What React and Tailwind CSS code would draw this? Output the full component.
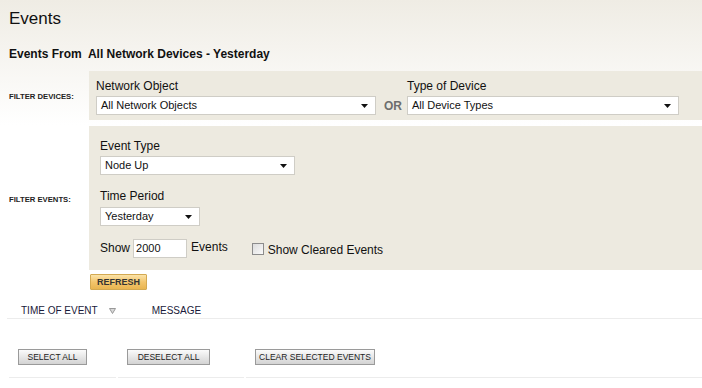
import React from 'react';

const Caret = () => (
  <svg width="7" height="4" viewBox="0 0 7 4" className="shrink-0">
    <path d="M0 0h7L3.5 4z" fill="#111" />
  </svg>
);

const Select = ({ value, className }) => (
  <div
    className={`flex h-[19px] items-center justify-between border border-[#cfcdc6] bg-white pl-[4px] pr-[7px] text-[11px] text-[#111] ${className}`}
  >
    <span>{value}</span>
    <Caret />
  </div>
);

const GreyButton = ({ children, className }) => (
  <button
    className={`block h-[16px] whitespace-nowrap border border-[#9a9a9a] bg-gradient-to-b from-[#fbfbfb] to-[#d3d3d3] text-[8.5px] leading-[14px] text-[#222] ${className}`}
  >
    {children}
  </button>
);

export default function App() {
  return (
    <div className="h-[388px] w-[702px] overflow-hidden bg-[linear-gradient(#efece4,#ffffff_125px)] font-['Liberation_Sans',Arial,sans-serif] text-[#111]">
      {/* Title */}
      <div className="h-[71px] pl-[9px] pt-[9px]">
        <h1 className="text-[17px] leading-[20px]">Events</h1>
        <p className="mt-[18px] text-[12px] font-bold leading-[14px]">
          Events From&nbsp; All Network Devices - Yesterday
        </p>
      </div>

      {/* Filter devices */}
      <div className="flex h-[49px]">
        <div className="flex w-[89px] items-center whitespace-nowrap pl-[9px] pt-[2px] text-[7.7px] font-bold text-[#222]">
          FILTER DEVICES:
        </div>
        <div className="flex flex-1 items-end bg-[#edeae0] pb-[5px] pl-[7px]">
          <div className="flex flex-col">
            <span className="mb-[3px] text-[12px] leading-[14px]">Network Object</span>
            <Select value="All Network Objects" className="w-[280px]" />
          </div>
          <span className="mb-[2px] ml-[8px] mr-[5px] text-[12px] font-bold leading-[14px] text-[#6e6e6e]">OR</span>
          <div className="flex flex-col">
            <span className="mb-[3px] text-[12px] leading-[14px]">Type of Device</span>
            <Select value="All Device Types" className="w-[272px]" />
          </div>
        </div>
      </div>

      {/* Filter events */}
      <div className="mt-[6px] flex h-[144px]">
        <div className="flex w-[89px] items-center whitespace-nowrap pl-[9px] pt-[3px] text-[7.7px] font-bold text-[#222]">
          FILTER EVENTS:
        </div>
        <div className="flex flex-1 flex-col bg-[#edeae0] pl-[11px] pt-[13px]">
          <span className="text-[12px] leading-[14px]">Event Type</span>
          <Select value="Node Up" className="mt-[3px] w-[195px]" />
          <span className="mt-[14px] text-[12px] leading-[14px]">Time Period</span>
          <Select value="Yesterday" className="mt-[4px] w-[100px]" />
          <div className="mt-[11px] flex items-center text-[12px]">
            <span>Show</span>
            <input
              readOnly
              value="2000"
              className="ml-[3px] h-[19px] w-[54px] border border-[#cfcdc6] bg-white px-[2px] text-[11px] text-[#111] outline-none"
            />
            <span className="ml-[4px] -mt-[3px]">Events</span>
            <span className="ml-[24px] mt-[2px] h-[12px] w-[12px] border border-[#8c8c8c] bg-gradient-to-br from-[#dcdcdc] to-[#fafafa]" />
            <span className="ml-[4px] mt-[4px]">Show Cleared Events</span>
          </div>
        </div>
      </div>

      {/* Refresh */}
      <div className="flex pl-[90px] pt-[4px]">
        <button className="block h-[16px] w-[57px] rounded-[1px] border border-[#d3a952] bg-gradient-to-b from-[#fbe3a8] via-[#f3c56c] to-[#e9b550] text-[9px] font-bold leading-[14px] text-[#333]">
          REFRESH
        </button>
      </div>

      {/* Table header */}
      <div className="ml-[7px] mt-[13px] flex h-[16px] items-center border-b border-[#ececec] pl-[14px] text-[10px] leading-[12px] text-[#1a1a3a]">
        <span>TIME OF EVENT</span>
        <svg width="7" height="6" viewBox="0 0 7 6" className="ml-[11px] mt-[1px]">
          <path d="M0.5 0.5h6L3.5 5.5z" fill="#d8d8d8" stroke="#999" strokeWidth="1" />
        </svg>
        <span className="ml-[36px]">MESSAGE</span>
      </div>

      {/* Actions */}
      <div className="flex pt-[30px]">
        <div className="ml-[9px] w-[107px] border-b border-[#ececec] pb-[12px] pl-[9px]">
          <GreyButton className="w-[69px]">SELECT ALL</GreyButton>
        </div>
        <div className="ml-[2px] w-[126px] border-b border-[#ececec] pb-[12px] pl-[9px]">
          <GreyButton className="w-[83px]">DESELECT ALL</GreyButton>
        </div>
        <div className="ml-[2px] flex-1 border-b border-[#ececec] pb-[12px] pl-[9px]">
          <GreyButton className="w-[120px]">CLEAR SELECTED EVENTS</GreyButton>
        </div>
      </div>
    </div>
  );
}
